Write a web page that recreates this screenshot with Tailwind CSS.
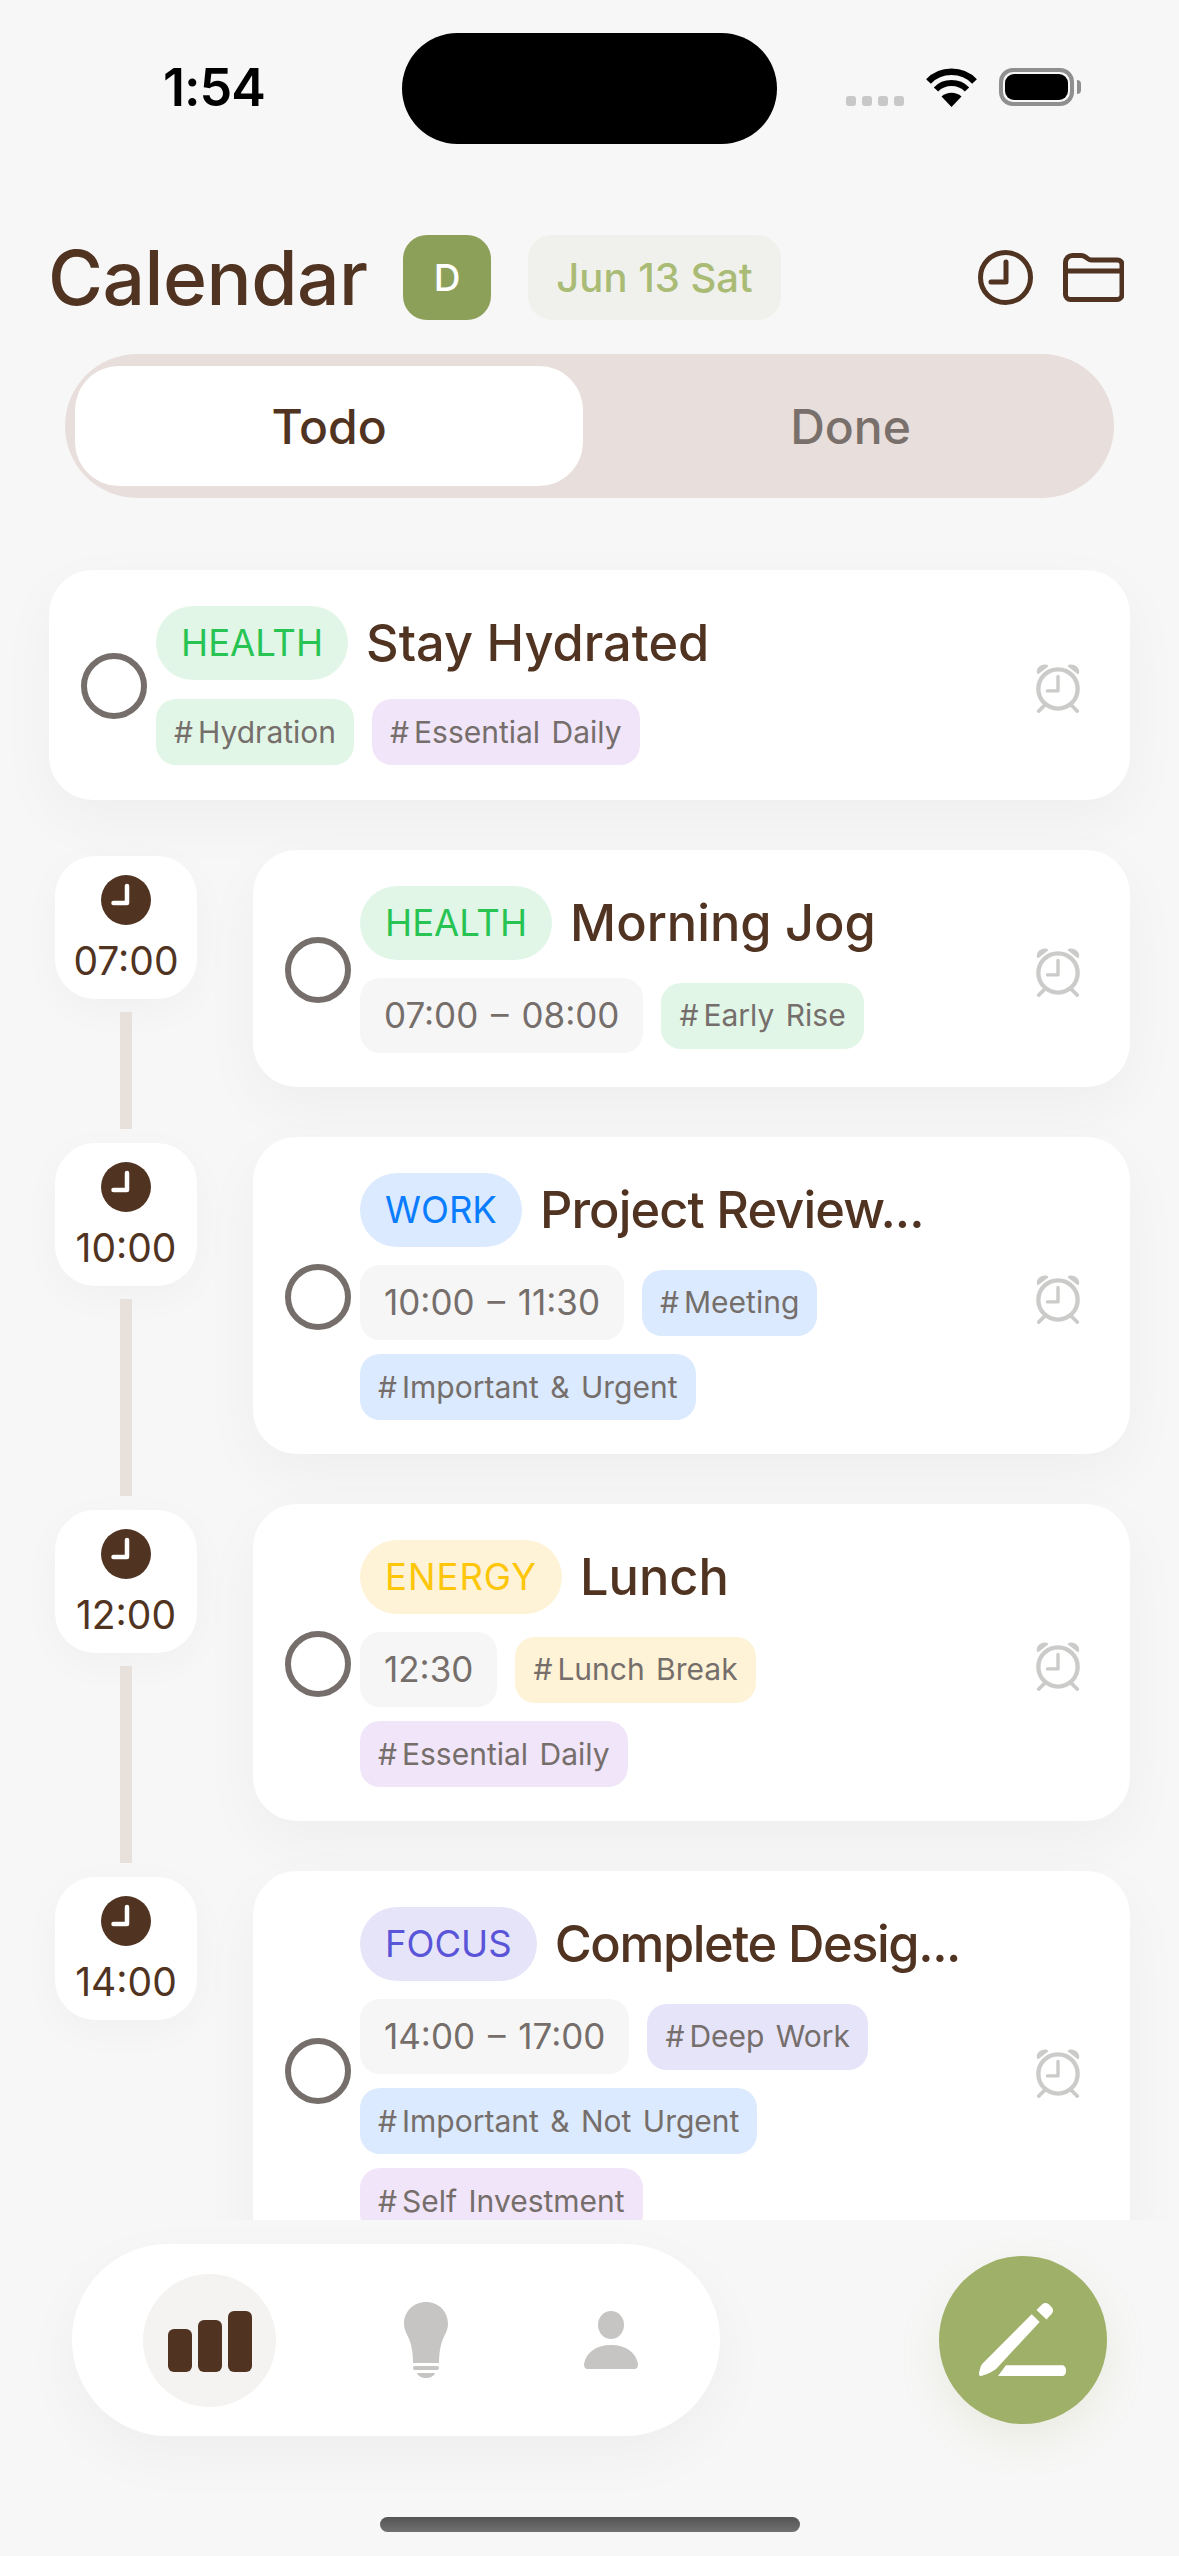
<!DOCTYPE html>
<html>
  <head>
    <meta charset="UTF-8">
    <title>Calendar</title>
    <script src="https://cdn.jsdelivr.net/npm/@tailwindcss/browser@4"></script>
  </head>
  <body>
    <svg class="hidden">
      <symbol id="alarm" viewBox="0 0 48 52">
        <circle cx="24" cy="27" r="20.5" fill="none" stroke="currentColor" stroke-width="4.5"/>
        <path d="M24 14v15H13" fill="none" stroke="currentColor" stroke-width="3.5" stroke-linecap="round" stroke-linejoin="round"/>
        <path d="M2 10c-1-5 5-10 11-8 1 1 1 2 0 2L4 11c-1 1-2 0-2-1zM46 10c1-5-5-10-11-8-1 1-1 2 0 2l9 7c1 1 2 0 2-1z" fill="currentColor"/>
        <path d="M10 44l-6 6M38 44l6 6" fill="none" stroke="currentColor" stroke-width="4" stroke-linecap="round"/>
      </symbol>
      <symbol id="time" viewBox="0 0 50 50">
        <circle cx="25" cy="25" r="25" fill="#503321"/>
        <path d="M26 11v17H12.500" fill="none" stroke="#fff" stroke-width="4.500" stroke-linecap="round" stroke-linejoin="round"/>
      </symbol>
    </svg>

    <div class="w-[1179px] h-[2556px] overflow-hidden flex flex-col bg-[#f7f7f7] font-['Inter','Noto_Sans',sans-serif] text-[#503321]">
      <!-- status bar -->
      <div class="h-[144px] pt-[33px] flex items-start">
        <div class="w-[402px] pl-[163px] pt-[26px] text-[52px] leading-[58px] font-semibold text-black tracking-[-1px]">1:54</div>
        <div class="w-[375px] h-[111px] rounded-[56px] bg-black"></div>
        <div class="ml-[69px] mt-[63px] flex gap-[6px]">
          <span class="w-[10px] h-[10px] rounded-[3px] bg-[#c8c8c8]"></span>
          <span class="w-[10px] h-[10px] rounded-[3px] bg-[#c8c8c8]"></span>
          <span class="w-[10px] h-[10px] rounded-[3px] bg-[#c8c8c8]"></span>
          <span class="w-[10px] h-[10px] rounded-[3px] bg-[#c8c8c8]"></span>
        </div>
        <svg class="ml-[22px] mt-[35px]" width="51" height="39" viewBox="0 0 51 39">
          <path d="M25.500 39L15.500 28.500C21 23.500 30 23.500 35.500 28.500Z" fill="#000"/>
          <path d="M10 21.500C18 12.800 33 12.800 41 21.500" fill="none" stroke="#000" stroke-width="6"/>
          <path d="M2.500 13.500C14.500 0.500 36.500 0.500 48.500 13.500" fill="none" stroke="#000" stroke-width="6.500"/>
        </svg>
        <div class="ml-[22px] mt-[35px] w-[75px] h-[38px] rounded-[14px] border-[4px] border-[#8f8f8f] p-[2px]">
          <div class="w-full h-full rounded-[9px] bg-black"></div>
        </div>
        <div class="ml-[3px] mt-[47px] w-[4px] h-[14px] rounded-r-full bg-[#8f8f8f]"></div>
      </div>

      <!-- header -->
      <div class="mt-[91px] h-[85px] pl-[48px] pr-[55px] flex items-center">
        <h1 class="w-[355px] text-[75px] leading-[85px] font-medium tracking-[-0.5px]">Calendar</h1>
        <div class="w-[88px] h-[85px] rounded-[24px] bg-[#8ca05a] flex items-center justify-center text-white text-[37px] font-medium">D</div>
        <div class="ml-[37px] w-[253px] h-[85px] rounded-[24px] bg-[#f0f1ec] flex items-center justify-center text-[#a9bb75] text-[40px] font-medium">Jun 13 Sat</div>
        <svg class="ml-auto" width="55" height="55" viewBox="0 0 55 55" fill="none" stroke="#503321">
          <circle cx="27.500" cy="27.500" r="25" stroke-width="5"/>
          <path d="M28 12v20H13" stroke-width="5" stroke-linecap="round" stroke-linejoin="round"/>
        </svg>
        <svg class="ml-[30px]" width="61" height="49" viewBox="0 0 61 49" fill="none" stroke="#503321" stroke-width="5">
          <path d="M2.500 9.500a7 7 0 0 1 7-7h9c5 0 5 4.500 10 4.500h26a4.500 4.500 0 0 1 4.500 4.500v30a5 5 0 0 1-5 5H7.500a5 5 0 0 1-5-5z" stroke-linejoin="round"/>
          <path d="M3 18h55"/>
        </svg>
      </div>

      <!-- tabs -->
      <div class="mt-[34px] mx-[65px] h-[144px] rounded-[72px] bg-[#e8dedb] py-[12px] pl-[10px] flex text-[48px] font-medium">
        <div class="w-[508px] pt-[2px] rounded-[44px] bg-white flex items-center justify-center">Todo</div>
        <div class="flex-1 pl-[4px] pt-[2px] flex items-center justify-center text-[#7a706b]">Done</div>
      </div>

      <!-- list -->
      <div class="h-[1722px] overflow-hidden pt-[72px] pl-[49px] pr-[49px] flex flex-col gap-[50px]">
        <div class="w-[1081px] rounded-[44px] bg-white shadow-[0_20px_60px_rgba(0,0,0,0.04)] pl-[32px] pr-[49px] pt-[36px] pb-[35px] flex items-center">
          <div class="w-[66px] h-[66px] rounded-full border-[6px] border-[#756e6b] shrink-0"></div>
          <div class="ml-[9px] flex-1 flex flex-col gap-[19px]">
            <div class="flex items-center gap-[18px]">
              <span class="h-[74px] px-[25px] rounded-full bg-[#e1f6e7] text-[#27c454] text-[36.5px] flex items-center">HEALTH</span>
              <span class="text-[50.5px] leading-none font-medium">Stay Hydrated</span>
            </div>
            <div class="flex flex-wrap items-center gap-x-[18px] gap-y-[14px] text-[30px] [word-spacing:3px] text-[#756e6b]">
              <span class="h-[66px] px-[18px] rounded-[20px] bg-[#e1f6e7] flex items-center"><span class="mr-[5px]">#</span>Hydration</span>
              <span class="h-[66px] px-[18px] rounded-[20px] bg-[#f1e5f9] flex items-center"><span class="mr-[5px]">#</span>Essential Daily</span>
            </div>
          </div>
          <svg class="w-[46px] h-[50px] mt-[5px] text-[#cbcbc9] shrink-0"><use href="#alarm"/></svg>
        </div>

        <div class="flex">
          <div class="ml-[6px] w-[142px] pt-[6px] flex flex-col items-center shrink-0">
            <div class="w-[142px] h-[143px] rounded-[40px] bg-white shadow-[0_10px_40px_rgba(0,0,0,0.03)] flex flex-col items-center pt-[19px]">
              <svg class="w-[50px] h-[50px]"><use href="#time"/></svg>
              <span class="mt-[11px] text-[39px] leading-[50px]">07:00</span>
            </div>
            <div class="mt-[13px] -mb-[42px] flex-1 w-[12px] bg-[#e8e0da]"></div>
          </div>
          <div class="ml-[56px] flex-1 rounded-[44px] bg-white shadow-[0_20px_60px_rgba(0,0,0,0.04)] pl-[32px] pr-[49px] pt-[36px] pb-[34px] flex items-center">
            <div class="w-[66px] h-[66px] rounded-full border-[6px] border-[#756e6b] shrink-0"></div>
            <div class="ml-[9px] flex-1 flex flex-col gap-[18px]">
              <div class="flex items-center gap-[18px]">
                <span class="h-[74px] px-[25px] rounded-full bg-[#e1f6e7] text-[#27c454] text-[36.5px] flex items-center">HEALTH</span>
                <span class="text-[50.5px] leading-none font-medium">Morning Jog</span>
              </div>
              <div class="flex flex-wrap items-center gap-x-[18px] gap-y-[14px] text-[30px] [word-spacing:3px] text-[#756e6b]">
                <span class="h-[75px] px-[24px] rounded-[20px] bg-[#f6f6f6] text-[35px] flex items-center">07:00 – 08:00</span>
                <span class="h-[66px] px-[18px] rounded-[20px] bg-[#e1f6e7] flex items-center"><span class="mr-[5px]">#</span>Early Rise</span>
              </div>
            </div>
            <svg class="w-[46px] h-[50px] mt-[5px] text-[#cbcbc9] shrink-0"><use href="#alarm"/></svg>
          </div>
        </div>

        <div class="flex">
          <div class="ml-[6px] w-[142px] pt-[6px] flex flex-col items-center shrink-0">
            <div class="w-[142px] h-[143px] rounded-[40px] bg-white shadow-[0_10px_40px_rgba(0,0,0,0.03)] flex flex-col items-center pt-[19px]">
              <svg class="w-[50px] h-[50px]"><use href="#time"/></svg>
              <span class="mt-[11px] text-[39px] leading-[50px]">10:00</span>
            </div>
            <div class="mt-[13px] -mb-[42px] flex-1 w-[12px] bg-[#e8e0da]"></div>
          </div>
          <div class="ml-[56px] flex-1 rounded-[44px] bg-white shadow-[0_20px_60px_rgba(0,0,0,0.04)] pl-[32px] pr-[49px] pt-[36px] pb-[34px] flex items-center">
            <div class="w-[66px] h-[66px] rounded-full border-[6px] border-[#756e6b] shrink-0"></div>
            <div class="ml-[9px] flex-1 flex flex-col gap-[18px]">
              <div class="flex items-center gap-[18px]">
                <span class="h-[74px] px-[25px] rounded-full bg-[#dbeafe] text-[#0a7cff] text-[36.5px] flex items-center">WORK</span>
                <span class="text-[50.5px] leading-none font-medium tracking-[-0.9px]">Project Review...</span>
              </div>
              <div class="flex flex-wrap items-center gap-x-[18px] gap-y-[14px] text-[30px] [word-spacing:3px] text-[#756e6b]">
                <span class="h-[75px] px-[24px] rounded-[20px] bg-[#f6f6f6] text-[35px] flex items-center">10:00 – 11:30</span>
                <span class="h-[66px] px-[18px] rounded-[20px] bg-[#dbeafe] flex items-center"><span class="mr-[5px]">#</span>Meeting</span>
                <span class="h-[66px] px-[18px] rounded-[20px] bg-[#dbeafe] flex items-center"><span class="mr-[5px]">#</span>Important &amp; Urgent</span>
              </div>
            </div>
            <svg class="w-[46px] h-[50px] mt-[5px] text-[#cbcbc9] shrink-0"><use href="#alarm"/></svg>
          </div>
        </div>

        <div class="flex">
          <div class="ml-[6px] w-[142px] pt-[6px] flex flex-col items-center shrink-0">
            <div class="w-[142px] h-[143px] rounded-[40px] bg-white shadow-[0_10px_40px_rgba(0,0,0,0.03)] flex flex-col items-center pt-[19px]">
              <svg class="w-[50px] h-[50px]"><use href="#time"/></svg>
              <span class="mt-[11px] text-[39px] leading-[50px]">12:00</span>
            </div>
            <div class="mt-[13px] -mb-[42px] flex-1 w-[12px] bg-[#e8e0da]"></div>
          </div>
          <div class="ml-[56px] flex-1 rounded-[44px] bg-white shadow-[0_20px_60px_rgba(0,0,0,0.04)] pl-[32px] pr-[49px] pt-[36px] pb-[34px] flex items-center">
            <div class="w-[66px] h-[66px] rounded-full border-[6px] border-[#756e6b] shrink-0"></div>
            <div class="ml-[9px] flex-1 flex flex-col gap-[18px]">
              <div class="flex items-center gap-[18px]">
                <span class="h-[74px] px-[25px] rounded-full bg-[#fef3d6] text-[#fdc60a] text-[36.5px] flex items-center tracking-[1px]">ENERGY</span>
                <span class="text-[50.5px] leading-none font-medium">Lunch</span>
              </div>
              <div class="flex flex-wrap items-center gap-x-[18px] gap-y-[14px] text-[30px] [word-spacing:3px] text-[#756e6b]">
                <span class="h-[75px] px-[24px] rounded-[20px] bg-[#f6f6f6] text-[35px] flex items-center">12:30</span>
                <span class="h-[66px] px-[18px] rounded-[20px] bg-[#fef3d6] flex items-center"><span class="mr-[5px]">#</span>Lunch Break</span>
                <span class="h-[66px] px-[18px] rounded-[20px] bg-[#f1e5f9] flex items-center"><span class="mr-[5px]">#</span>Essential Daily</span>
              </div>
            </div>
            <svg class="w-[46px] h-[50px] mt-[5px] text-[#cbcbc9] shrink-0"><use href="#alarm"/></svg>
          </div>
        </div>

        <div class="flex">
          <div class="ml-[6px] w-[142px] pt-[6px] flex flex-col items-center shrink-0">
            <div class="w-[142px] h-[143px] rounded-[40px] bg-white shadow-[0_10px_40px_rgba(0,0,0,0.03)] flex flex-col items-center pt-[19px]">
              <svg class="w-[50px] h-[50px]"><use href="#time"/></svg>
              <span class="mt-[11px] text-[39px] leading-[50px]">14:00</span>
            </div>
          </div>
          <div class="ml-[56px] flex-1 rounded-[44px] bg-white shadow-[0_20px_60px_rgba(0,0,0,0.04)] pl-[32px] pr-[49px] pt-[36px] pb-[34px] flex items-center">
            <div class="w-[66px] h-[66px] rounded-full border-[6px] border-[#756e6b] shrink-0"></div>
            <div class="ml-[9px] flex-1 flex flex-col gap-[18px]">
              <div class="flex items-center gap-[18px]">
                <span class="h-[74px] px-[25px] rounded-full bg-[#e6e4f9] text-[#5a55d8] text-[36.5px] flex items-center">FOCUS</span>
                <span class="text-[50.5px] leading-none font-medium tracking-[-1.4px]">Complete Desig...</span>
              </div>
              <div class="flex flex-wrap items-center gap-x-[18px] gap-y-[14px] text-[30px] [word-spacing:3px] text-[#756e6b]">
                <span class="h-[75px] px-[24px] rounded-[20px] bg-[#f6f6f6] text-[35px] flex items-center">14:00 – 17:00</span>
                <span class="h-[66px] px-[18px] rounded-[20px] bg-[#e6e4f9] flex items-center"><span class="mr-[5px]">#</span>Deep Work</span>
                <span class="h-[66px] px-[18px] rounded-[20px] bg-[#dbeafe] flex items-center"><span class="mr-[5px]">#</span>Important &amp; Not Urgent</span>
                <span class="h-[66px] px-[18px] rounded-[20px] bg-[#f1e5f9] flex items-center"><span class="mr-[5px]">#</span>Self Investment</span>
              </div>
            </div>
            <svg class="w-[46px] h-[50px] mt-[5px] text-[#cbcbc9] shrink-0"><use href="#alarm"/></svg>
          </div>
        </div>
      </div>

      <!-- bottom nav -->
      <div class="mt-[24px] pl-[72px] flex items-center">
        <div class="w-[648px] h-[192px] rounded-[96px] bg-white shadow-[0_20px_60px_rgba(0,0,0,0.04)] flex items-center pl-[71px]">
          <div class="w-[133px] h-[133px] rounded-full bg-[#f5f3f1] flex items-end justify-center gap-[6px] pb-[35px]">
            <span class="w-[24px] h-[43px] rounded-[6px] bg-[#503321]"></span>
            <span class="w-[24px] h-[52px] rounded-[6px] bg-[#503321]"></span>
            <span class="w-[24px] h-[61px] rounded-[6px] bg-[#503321]"></span>
          </div>
          <svg class="ml-[128px]" width="44" height="76" viewBox="0 0 44 76" fill="#c6c5c3">
            <path d="M22 0C9.500 0 0 9.500 0 21.500C0 30 5 34 7 43C8.500 49 9 55 9 61H35C35 55 35.500 49 37 43C39 34 44 30 44 21.500C44 9.500 34.500 0 22 0Z"/>
            <rect x="9" y="64" width="26" height="4" rx="2"/>
            <path d="M13 71H31C30 74.500 26 76 22 76C18 76 14 74.500 13 71Z"/>
          </svg>
          <svg class="ml-[136px]" width="54" height="58" viewBox="0 0 54 58" fill="#c6c5c3">
            <ellipse cx="27" cy="14" rx="13" ry="14"/>
            <path d="M0 53C2 41 13 34 27 34C41 34 52 41 54 53C54 56 53 58 50 58H4C1 58 0 56 0 53Z"/>
          </svg>
        </div>
        <div class="ml-[219px] w-[168px] h-[168px] rounded-full bg-[#9fb068] shadow-[0_16px_40px_rgba(159,176,104,0.15)] flex items-center justify-center">
          <svg width="88" height="74" viewBox="0 0 88 74" fill="#fff">
            <path d="M3.300 60.700L52.700 11.300L60.700 19L17.300 65.700C12 70 5 72 2 73C0 73.300 -0.300 71 0 70C1 66 1.500 63 3.300 60.700Z"/>
            <path d="M57.500 7L63 1.500C65 -0.500 68 -0.500 70 1.500L72.500 4C74.500 6 74.500 9 72.500 11L67.500 16.500Z"/>
            <path d="M19 73L27 62.300H83C86 62.300 87 65 87 67.500C87 70.500 86 73 83 73Z"/>
          </svg>
        </div>
      </div>

      <!-- home indicator -->
      <div class="mt-[81px] ml-[380px] w-[420px] h-[15px] rounded-full bg-gradient-to-b from-[#555555] to-[#707070]"></div>
    </div>
  </body>
</html>
